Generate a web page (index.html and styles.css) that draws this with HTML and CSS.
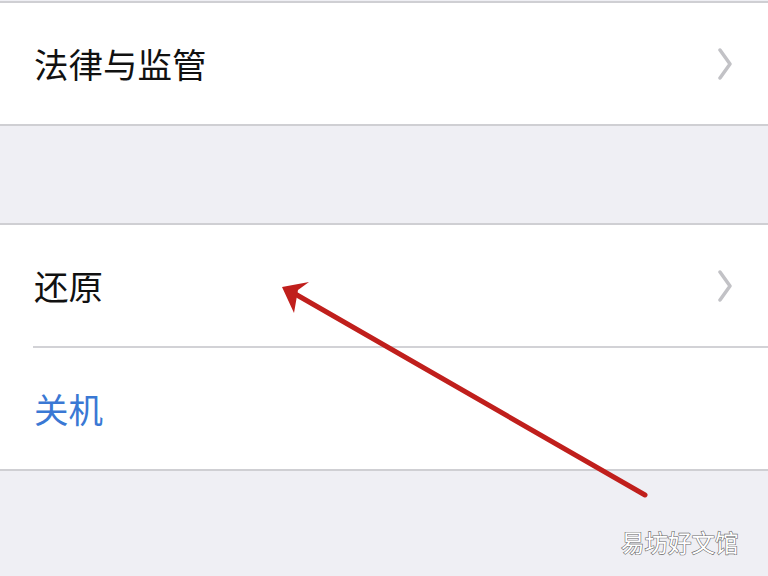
FILE: index.html
```html
<!DOCTYPE html>
<html lang="zh">
<head>
<meta charset="utf-8">
<link rel="stylesheet" href="styles.css">
</head>
<body>
<div class="page">
  <div class="top-gap"></div>
  <div class="group">
    <div class="cell">
      <span class="label">法律与监管</span>
      <svg class="chev" width="14" height="32" viewBox="0 0 14 32"><path d="M2 2 L12 16 L2 30" fill="none" stroke="#c2c2c6" stroke-width="3.5" stroke-linecap="round" stroke-linejoin="round"/></svg>
    </div>
  </div>
  <div class="spacer"></div>
  <div class="group">
    <div class="cell">
      <span class="label">还原</span>
      <svg class="chev" width="14" height="32" viewBox="0 0 14 32"><path d="M2 2 L12 16 L2 30" fill="none" stroke="#c2c2c6" stroke-width="3.5" stroke-linecap="round" stroke-linejoin="round"/></svg>
    </div>
    <div class="sep"></div>
    <div class="cell">
      <span class="label blue">关机</span>
    </div>
  </div>
  <svg class="arrow" width="768" height="576" viewBox="0 0 768 576">
    <line x1="645" y1="495" x2="290" y2="291" stroke="#c01f1c" stroke-width="5" stroke-linecap="round"/>
    <path d="M282 287 L309 282 L298 290 L294 313 Z" fill="#c01f1c"/>
  </svg>
  <div class="watermark">易坊好文馆</div>
</div>
</body>
</html>
```
FILE: styles.css
```css
html, body {
  margin: 0;
  padding: 0;
  background: #efeff4;
  width: 768px;
  height: 576px;
  overflow: hidden;
}
.page {
  position: relative;
  width: 768px;
  height: 576px;
  font-family: "PingFang SC", "Noto Sans CJK SC", "Noto Sans", sans-serif;
}
.top-gap {
  height: 1px;
}
.group {
  background: #ffffff;
  border-top: 2px solid #cfcfd3;
  border-bottom: 2px solid #cfcfd3;
}
.cell {
  height: 121px;
  display: flex;
  align-items: center;
  justify-content: space-between;
  padding: 0 36px 0 34px;
}
.label {
  font-size: 34.5px;
  color: #111111;
  line-height: 1;
  letter-spacing: 0;
}
.label.blue {
  color: #3a78d4;
}
.sep {
  height: 2px;
  margin-left: 33px;
  background: #d2d2d6;
}
.spacer {
  height: 97px;
}
.arrow {
  position: absolute;
  left: 0;
  top: 0;
}
.watermark {
  position: absolute;
  left: 621px;
  top: 527px;
  font-size: 23.5px;
  color: #ffffff;
  -webkit-text-stroke: 1.2px #6a6a6a;
  paint-order: stroke fill;
  letter-spacing: 0;
  line-height: 1.3;
}
```
